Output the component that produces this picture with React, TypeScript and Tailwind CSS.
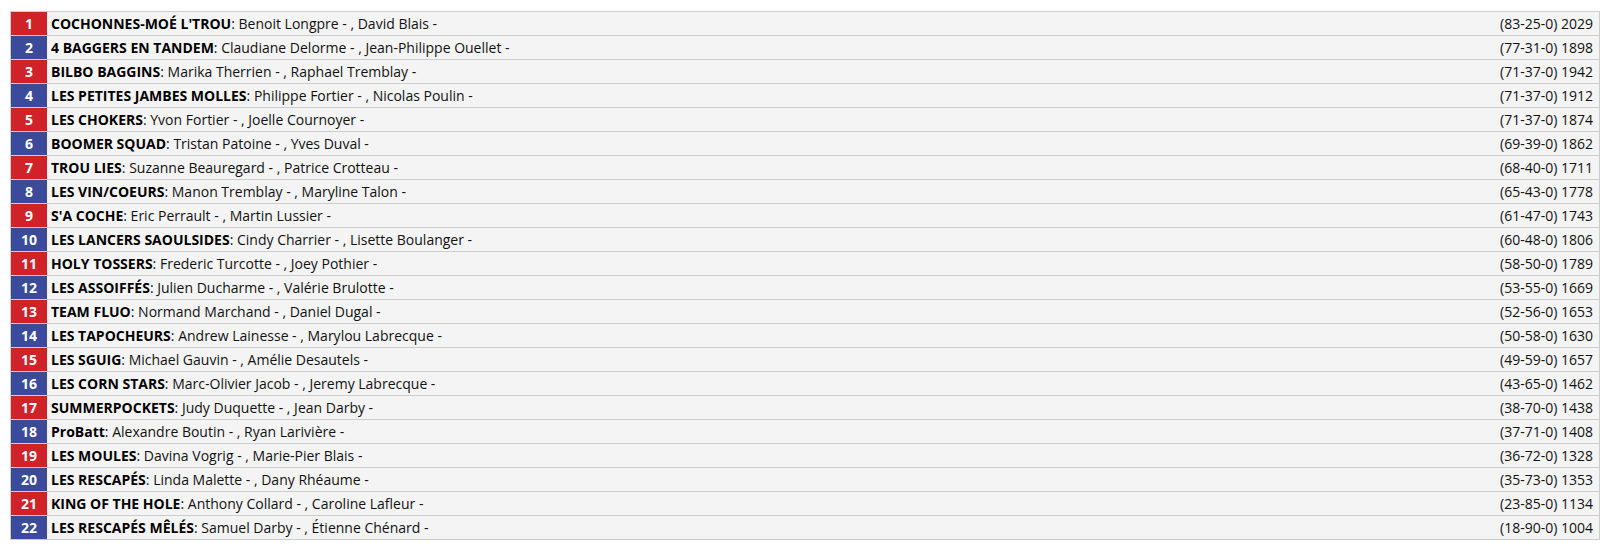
import React from "react";

const rows: [string, string, string][] = [
  ["COCHONNES-MOÉ L'TROU", "Benoit Longpre - , David Blais -", "(83-25-0) 2029"],
  ["4 BAGGERS EN TANDEM", "Claudiane Delorme - , Jean-Philippe Ouellet -", "(77-31-0) 1898"],
  ["BILBO BAGGINS", "Marika Therrien - , Raphael Tremblay -", "(71-37-0) 1942"],
  ["LES PETITES JAMBES MOLLES", "Philippe Fortier - , Nicolas Poulin -", "(71-37-0) 1912"],
  ["LES CHOKERS", "Yvon Fortier - , Joelle Cournoyer -", "(71-37-0) 1874"],
  ["BOOMER SQUAD", "Tristan Patoine - , Yves Duval -", "(69-39-0) 1862"],
  ["TROU LIES", "Suzanne Beauregard - , Patrice Crotteau -", "(68-40-0) 1711"],
  ["LES VIN/COEURS", "Manon Tremblay - , Maryline Talon -", "(65-43-0) 1778"],
  ["S'A COCHE", "Eric Perrault - , Martin Lussier -", "(61-47-0) 1743"],
  ["LES LANCERS SAOULSIDES", "Cindy Charrier - , Lisette Boulanger -", "(60-48-0) 1806"],
  ["HOLY TOSSERS", "Frederic Turcotte - , Joey Pothier -", "(58-50-0) 1789"],
  ["LES ASSOIFFÉS", "Julien Ducharme - , Valérie Brulotte -", "(53-55-0) 1669"],
  ["TEAM FLUO", "Normand Marchand - , Daniel Dugal -", "(52-56-0) 1653"],
  ["LES TAPOCHEURS", "Andrew Lainesse - , Marylou Labrecque -", "(50-58-0) 1630"],
  ["LES SGUIG", "Michael Gauvin - , Amélie Desautels -", "(49-59-0) 1657"],
  ["LES CORN STARS", "Marc-Olivier Jacob - , Jeremy Labrecque -", "(43-65-0) 1462"],
  ["SUMMERPOCKETS", "Judy Duquette - , Jean Darby -", "(38-70-0) 1438"],
  ["ProBatt", "Alexandre Boutin - , Ryan Larivière -", "(37-71-0) 1408"],
  ["LES MOULES", "Davina Vogrig - , Marie-Pier Blais -", "(36-72-0) 1328"],
  ["LES RESCAPÉS", "Linda Malette - , Dany Rhéaume -", "(35-73-0) 1353"],
  ["KING OF THE HOLE", "Anthony Collard - , Caroline Lafleur -", "(23-85-0) 1134"],
  ["LES RESCAPÉS MÊLÉS", "Samuel Darby - , Étienne Chénard -", "(18-90-0) 1004"],
];

export default function App() {
  return (
    <div className="bg-white w-[1614px] h-[547px] pl-[10px] pt-[11px] font-['Open_Sans',sans-serif] text-[14px] text-[#111]">
      <div className="w-[1590px] border-t border-l border-r border-[#cccccc]">
        {rows.map(([team, players, score], i) => (
          <div key={i} className="flex h-[24px] border-b border-[#cccccc] bg-[#f4f4f4]">
            <div
              className={
                "w-[36px] shrink-0 flex items-center justify-center text-white font-bold " +
                (i % 2 === 0 ? "bg-[#cf2229]" : "bg-[#3b4a9b]")
              }
            >
              {i + 1}
            </div>
            <div className="flex-1 flex items-center pl-[4px] whitespace-nowrap">
              <span className="font-bold text-black">{team}</span>
              <span>: {players}</span>
            </div>
            <div className="flex items-center justify-end pr-[6px] whitespace-nowrap">
              {score}
            </div>
          </div>
        ))}
      </div>
    </div>
  );
}
